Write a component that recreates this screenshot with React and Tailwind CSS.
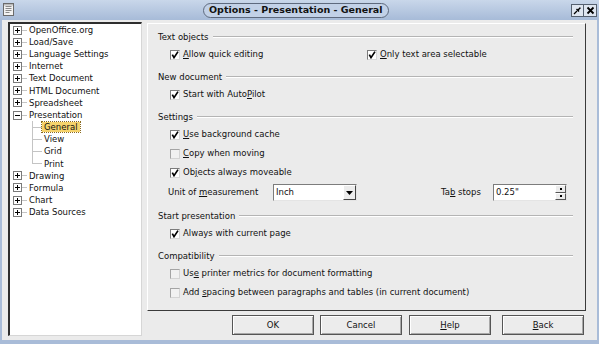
import React from 'react';

const U = ({ children }) => <span className="underline underline-offset-[1px]">{children}</span>;

function CheckBox({ checked }) {
  return (
    <span
      className={`relative w-[10px] h-[10px] shrink-0 border ${
        checked
          ? 'bg-white border-t-[#7c7c7c] border-l-[#7c7c7c] border-r-[#d8d8d8] border-b-[#d8d8d8]'
          : 'bg-[#f1f1f1] border-t-[#a4a4a4] border-l-[#a4a4a4] border-r-[#d4d4d4] border-b-[#d4d4d4]'
      }`}
    >
      {checked && (
        <svg className="absolute left-0 top-0" width="8" height="8" viewBox="0 0 8 8">
          <path d="M1.3 3.6 L3 6.6 L7 0.6" stroke="#000" strokeWidth="1.7" fill="none" />
        </svg>
      )}
    </span>
  );
}

function Option({ checked, children, className = '' }) {
  return (
    <div className={`flex items-center gap-[3px] h-[19px] ${className}`}>
      <CheckBox checked={checked} />
      <span className="whitespace-nowrap">{children}</span>
    </div>
  );
}

function Heading({ children }) {
  return (
    <div className="flex items-center h-[16px] pl-[10px] pr-[12px]">
      <span className="whitespace-nowrap">{children}</span>
      <span className="flex-1 ml-[4px] h-[2px] border-t border-t-[#b4b4b4] border-b border-b-white" />
    </div>
  );
}

function TreeBox({ open }) {
  return (
    <svg width="9" height="9" viewBox="0 0 9 9" className="shrink-0">
      <rect x="0.5" y="0.5" width="8" height="8" fill="#fff" stroke="#7a7a7a" />
      <path d="M2 4.5h5" stroke="#000" />
      {!open && <path d="M4.5 2v5" stroke="#000" />}
    </svg>
  );
}

function TopItem({ label, open }) {
  return (
    <div className="flex items-center h-[12.15px] pl-[3px]">
      <TreeBox open={open} />
      <span className="w-[5px] border-t border-[#c4c4c4]" />
      <span className="ml-[2px] whitespace-nowrap">{label}</span>
    </div>
  );
}

function SubItem({ label, last, selected }) {
  return (
    <div className="flex items-center h-[12.15px] pl-[22px]">
      <span className="w-[10px] self-stretch flex flex-col">
        <span className="flex-1 border-l border-b border-[#c4c4c4]" />
        <span className={`flex-1 ${last ? '' : 'border-l border-[#c4c4c4]'}`} />
      </span>
      <span
        className={`px-[2px] leading-[10px] whitespace-nowrap ${
          selected ? 'bg-[#f6d36c] outline outline-1 outline-dotted outline-[#8a6a20]' : ''
        }`}
      >
        {label}
      </span>
    </div>
  );
}

function Button({ children, className = '' }) {
  return (
    <div
      className={`w-[82px] h-[20px] flex items-center justify-center bg-[#ececec] border border-[#555] shadow-[inset_1px_1px_0_#fff,inset_-1px_-1px_0_#a8a8a8] ${className}`}
    >
      {children}
    </div>
  );
}

export default function App() {
  return (
    <div className="w-[599px] h-[344px] overflow-hidden flex flex-col bg-[#a9bcd8] font-['DejaVu_Sans',sans-serif] text-[8.5px] leading-none text-[#111]">
      {/* title bar */}
      <div className="h-[20px] flex items-center bg-gradient-to-b from-[#c9d7ea] to-[#a7bbd8] shrink-0">
        <svg className="ml-[3px] shrink-0" width="12" height="14" viewBox="0 0 12 14">
          <rect x="0.5" y="0.5" width="10" height="12" fill="#f2f2f2" stroke="#6b6b6b" />
          <path d="M2.5 3.5h6M2.5 5.5h6M2.5 7.5h6M2.5 9.5h4" stroke="#8a8a8a" />
          <rect x="1" y="1" width="9" height="1.5" fill="#b9b9b9" />
        </svg>
        <div className="ml-[188px] h-[15px] px-[5px] flex items-center rounded-full border border-[#5e6a7e] bg-[#c2d1e7] font-bold text-[9.5px] whitespace-nowrap">
          Options - Presentation - General
        </div>
        <div className="ml-auto mr-[2px] flex">
          <div className="w-[13px] h-[13px] flex items-center justify-center border border-[#55606f] bg-[#dfe6f0]">
            <svg width="9" height="9" viewBox="0 0 9 9">
              <path d="M1 8 L4 5" stroke="#000" strokeWidth="1.2" />
              <path d="M3 3.5 L5.5 6 L6.5 5 L5.8 4.2 L7.8 2.2 L8.2 2.4 L6.6 0.8 L6.8 1.2 L4.8 3.2 L4 2.5 Z" fill="#000" />
            </svg>
          </div>
          <div className="w-[13px] h-[13px] flex items-center justify-center border border-l-0 border-[#55606f] bg-[#dfe6f0]">
            <svg width="9" height="9" viewBox="0 0 9 9">
              <path d="M1.5 1.5 L7.5 7.5 M7.5 1.5 L1.5 7.5" stroke="#000" strokeWidth="1.8" />
            </svg>
          </div>
        </div>
      </div>

      {/* body */}
      <div className="flex-1 flex mx-[2px] mb-[4px] bg-[#ebebeb] min-h-0">
        {/* tree */}
        <div className="ml-[6px] mt-[2px] w-[134px] h-[314px] bg-white border-l-2 border-t-2 border-l-[#2e2e2e] border-t-[#2e2e2e] border-r border-b border-r-[#d6d6d6] border-b-[#d6d6d6] shrink-0">
          <TopItem label="OpenOffice.org" />
          <TopItem label="Load/Save" />
          <TopItem label="Language Settings" />
          <TopItem label="Internet" />
          <TopItem label="Text Document" />
          <TopItem label="HTML Document" />
          <TopItem label="Spreadsheet" />
          <TopItem label="Presentation" open />
          <SubItem label="General" selected />
          <SubItem label="View" />
          <SubItem label="Grid" />
          <SubItem label="Print" last />
          <TopItem label="Drawing" />
          <TopItem label="Formula" />
          <TopItem label="Chart" />
          <TopItem label="Data Sources" />
        </div>

        {/* right column */}
        <div className="ml-[5px] w-[439px] flex flex-col">
          <div className="mt-[3px] h-[288px] border border-t-white border-l-white border-r-[#3a3a3a] border-b-[#3a3a3a] flex flex-col gap-[5px] pt-[5px]">
            <div>
              <Heading>Text objects</Heading>
              <div className="flex pl-[22px]">
                <Option checked className="w-[197px]">
                  <U>A</U>llow quick editing
                </Option>
                <Option checked>
                  <U>O</U>nly text area selectable
                </Option>
              </div>
            </div>

            <div>
              <Heading>New document</Heading>
              <div className="pl-[22px]">
                <Option checked>
                  Start with Auto<U>P</U>ilot
                </Option>
              </div>
            </div>

            <div>
              <Heading>Settings</Heading>
              <div className="pl-[22px]">
                <Option checked>
                  <U>U</U>se background cache
                </Option>
                <Option>
                  <U>C</U>opy when moving
                </Option>
                <Option checked>
                  Ob<U>j</U>ects always moveable
                </Option>
              </div>
              <div className="flex items-center h-[21px] pl-[20px]">
                <span className="w-[105px] whitespace-nowrap">
                  Unit of <U>m</U>easurement
                </span>
                <div className="w-[84px] h-[17px] flex bg-white border border-t-[#7c7c7c] border-l-[#7c7c7c] border-r-[#e4e4e4] border-b-[#e4e4e4]">
                  <span className="flex-1 flex items-center pl-[2px]">Inch</span>
                  <span className="w-[13px] flex items-center justify-center bg-[#ececec] border border-t-white border-l-white border-r-[#444] border-b-[#444]">
                    <svg width="7" height="4" viewBox="0 0 7 4">
                      <path d="M0 0 H7 L3.5 4 Z" fill="#000" />
                    </svg>
                  </span>
                </div>
                <span className="ml-[84px] w-[52px] whitespace-nowrap">
                  Ta<U>b</U> stops
                </span>
                <div className="w-[74px] h-[17px] flex bg-white border border-t-[#7c7c7c] border-l-[#7c7c7c] border-r-[#e4e4e4] border-b-[#e4e4e4]">
                  <span className="flex-1 flex items-center pl-[2px]">0.25"</span>
                  <span className="w-[11px] flex flex-col">
                    <span className="flex-1 flex items-center justify-center bg-[#ececec] border border-t-white border-l-white border-r-[#555] border-b-[#555]">
                      <span className="w-[2px] h-[2px] bg-black" />
                    </span>
                    <span className="flex-1 flex items-center justify-center bg-[#ececec] border border-t-white border-l-white border-r-[#555] border-b-[#555]">
                      <span className="w-[2px] h-[2px] bg-black" />
                    </span>
                  </span>
                </div>
              </div>
            </div>

            <div>
              <Heading>Start presentation</Heading>
              <div className="pl-[22px]">
                <Option checked>Always with current page</Option>
              </div>
            </div>

            <div>
              <Heading>Compatibility</Heading>
              <div className="pl-[22px]">
                <Option>
                  Us<U>e</U> printer metrics for document formatting
                </Option>
                <Option>
                  Add <U>s</U>pacing between paragraphs and tables (in current document)
                </Option>
              </div>
            </div>
          </div>

          {/* buttons */}
          <div className="mt-[4px] flex pl-[85px]">
            <Button>OK</Button>
            <Button className="ml-[6px]">Cancel</Button>
            <Button className="ml-[7px]">
              <span>
                <U>H</U>elp
              </span>
            </Button>
            <Button className="ml-[11px]">
              <span>
                <U>B</U>ack
              </span>
            </Button>
          </div>
        </div>
      </div>
    </div>
  );
}
